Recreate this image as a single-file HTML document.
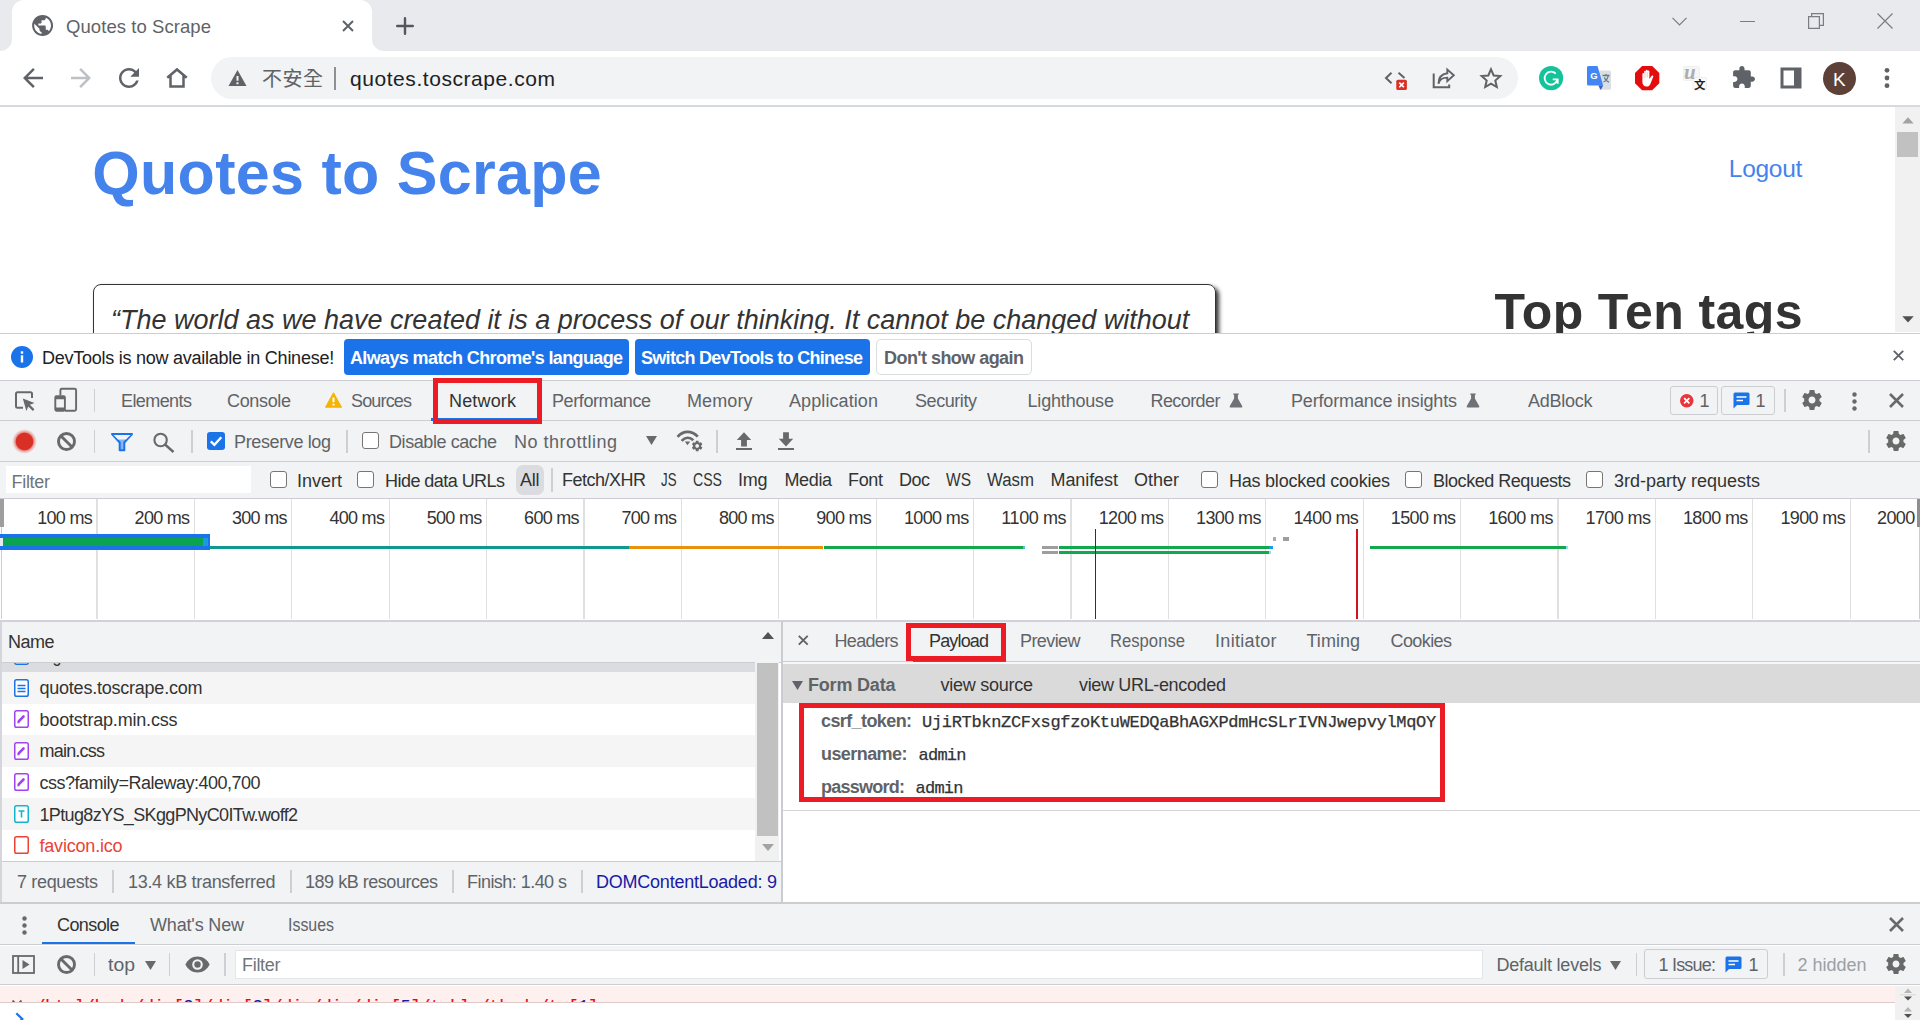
<!DOCTYPE html>
<html lang="en"><head>
<meta charset="utf-8">
<title>Quotes to Scrape</title>
<style>
html,body{margin:0;padding:0;}
body{width:1920px;height:1020px;overflow:hidden;background:#fff;position:relative;font-family:"Liberation Sans","Noto Sans CJK TC",sans-serif;font-size:18px;color:#333;}
.a{position:absolute;}
.t{position:absolute;white-space:nowrap;line-height:1;font-size:18px;color:#333;}
.g{color:#5f6368;}
.b{font-weight:bold;}
.m{font-family:"Liberation Mono","DejaVu Sans Mono",monospace;-webkit-text-stroke:0.250px currentColor;}
.sep{position:absolute;width:1.500px;background:#cdcfd3;}
.cb{position:absolute;width:15px;height:15px;border:1.5px solid #767676;border-radius:3px;background:#fff;}
.hl{position:absolute;left:0;width:1920px;height:1px;background:#cbcdd1;}
svg{position:absolute;overflow:visible;}
.redbox{position:absolute;border:5px solid #ed1c24;box-sizing:border-box;}
</style>
</head>
<body>
<!-- ===== Chrome tab strip ===== -->
<div class="a" style="left:0;top:0;width:1920px;height:51px;background:#e8eaed;"></div>
<svg style="left:0;top:0" width="384" height="51" viewBox="0 0 384 51"><path d="M0,51 A12,12 0 0 0 12,39 L12,12 A12,12 0 0 1 24,0 L360,0 A12,12 0 0 1 372,12 L372,39 A12,12 0 0 0 384,51 Z" fill="#fff"></path></svg>
<svg style="left:29.500px;top:13.400px" width="25.2" height="25.2" viewBox="0 0 24 24"><path fill="#5f6368" d="M12 2C6.48 2 2 6.48 2 12s4.48 10 10 10 10-4.48 10-10S17.52 2 12 2zm-1 17.93c-3.95-.49-7-3.85-7-7.93 0-.62.08-1.21.21-1.79L9 15v1c0 1.1.9 2 2 2v1.93zm6.9-2.54c-.26-.81-1-1.39-1.9-1.39h-1v-3c0-.55-.45-1-1-1H8v-2h2c.55 0 1-.45 1-1V7h2c1.1 0 2-.9 2-2v-.41c2.93 1.19 5 4.06 5 7.41 0 2.08-.8 3.97-2.1 5.39z"></path></svg>
<span class="t" style="color: rgb(95, 99, 104); font-size: 18.5px; left: 66px; top: 18px; letter-spacing: 0.07px;">Quotes to Scrape</span>
<svg style="left:342px;top:20px" width="12" height="12" viewBox="0 0 12 12"><path d="M1 1L11 11M11 1L1 11" stroke="#5f6368" stroke-width="2" fill="none"></path></svg>
<svg style="left:396px;top:16.500px" width="18" height="18" viewBox="0 0 18 18"><path d="M9 1.200V16.800M1.200 9H16.800" stroke="#54585d" stroke-width="2.400" stroke-linecap="round" fill="none"></path></svg>
<!-- window controls -->
<svg style="left:1672px;top:17px" width="15" height="9" viewBox="0 0 15 9"><path d="M0.5 0.8L7.5 7.8L14.5 0.8" stroke="#7a7d82" stroke-width="1.2" fill="none"></path></svg>
<div class="a" style="left:1740px;top:20.5px;width:15px;height:1.2px;background:#7a7d82"></div>
<svg style="left:1808px;top:13px" width="16" height="16" viewBox="0 0 16 16"><path d="M0.6 3.6H11.4V15.4H0.6Z M3.6 3.6V0.6H15.4V12.4H11.4" stroke="#7a7d82" stroke-width="1.2" fill="none"></path></svg>
<svg style="left:1877px;top:13px" width="16" height="16" viewBox="0 0 16 16"><path d="M0.5 0.5L15.5 15.5M15.5 0.5L0.5 15.5" stroke="#7a7d82" stroke-width="1.2" fill="none"></path></svg>
<!-- ===== toolbar ===== -->
<div class="a" style="left:0;top:51px;width:1920px;height:54px;background:#fff;"></div>
<div class="a" style="left:0;top:105px;width:1920px;height:1.900px;background:#d6d9dd;"></div>
<svg style="left:18px;top:63px" width="30" height="30" viewBox="0 0 24 24"><path fill="#5f6368" d="M20 11H7.83l5.59-5.59L12 4l-8 8 8 8 1.41-1.41L7.83 13H20v-2z"></path></svg>
<svg style="left:66px;top:63px" width="30" height="30" viewBox="0 0 24 24"><path fill="#bdc1c6" d="M4 11h12.17l-5.59-5.59L12 4l8 8-8 8-1.41-1.41L16.170 13H4v-2z"></path></svg>
<svg style="left:114px;top:63px" width="30" height="30" viewBox="0 0 24 24"><path fill="#5f6368" d="M17.65 6.35C16.2 4.9 14.21 4 12 4c-4.420 0-7.990 3.580-7.990 8s3.570 8 7.990 8c3.730 0 6.840-2.550 7.730-6h-2.080c-.82 2.330-3.040 4-5.650 4-3.310 0-6-2.690-6-6s2.690-6 6-6c1.660 0 3.140.69 4.220 1.780L13 11h7V4l-2.350 2.350z"></path></svg>
<svg style="left:162px;top:63px" width="30" height="30" viewBox="0 0 24 24"><path fill="none" stroke="#5f6368" stroke-width="2" stroke-linejoin="miter" d="M4.200 11.800L12 5.200L19.800 11.800M6.800 10V18.800H17.200V10"></path></svg>
<!-- omnibox -->
<div class="a" style="left:211px;top:57px;width:1307px;height:42px;border-radius:21px;background:#f1f3f4;"></div>
<svg style="left:228px;top:69px" width="19" height="18" viewBox="0 0 19 18"><path fill="#5f6368" d="M9.5 1L18.5 17H0.5Z"></path><path d="M9.5 7V11.800M9.5 13.300V15.200" stroke="#f1f3f4" stroke-width="2" fill="none"></path></svg>
<span class="t" style="color: rgb(95, 99, 104); font-size: 20px; font-family: &quot;Noto Sans CJK TC&quot;, &quot;Noto Sans CJK SC&quot;, sans-serif; left: 262px; top: 68px; letter-spacing: 0.5px;">不安全</span>
<div class="a" style="left:334.300px;top:67px;width:1.900px;height:22.500px;background:#8d9196"></div>
<span class="t" style="color: rgb(32, 33, 36); font-size: 21px; left: 350px; top: 67.5px; letter-spacing: 0.56px;">quotes.toscrape.com</span>
<!-- omnibox right icons -->
<svg style="left:1384px;top:71px" width="24" height="20" viewBox="0 0 24 20"><path d="M7.500 1.800L2 7L7.500 12.200" stroke="#5f6368" stroke-width="2" fill="none"></path><path d="M14.500 1.800L20.500 7" stroke="#5f6368" stroke-width="2" fill="none"></path><rect x="12.300" y="8.800" width="10.600" height="10.200" rx="1.500" fill="#d93025"></rect><path d="M15.300 11.600L19.900 16.200M19.900 11.600L15.300 16.200" stroke="#fff" stroke-width="1.600"></path></svg>
<svg style="left:1431px;top:66px" width="26" height="24" viewBox="0 0 26 24"><path d="M2.700 7.500V21.300H18.200V18.500" stroke="#5f6368" stroke-width="2" fill="none"></path><path d="M7.500 17.800C8.500 13.500 11.500 11.600 16.300 11.600V15.200L22.800 9.300L16.300 3.500V7.300C10.800 8 7.500 11.500 7.500 17.800Z" stroke="#5f6368" stroke-width="1.900" fill="none" stroke-linejoin="miter"></path></svg>
<svg style="left:1479px;top:66px" width="24" height="24" viewBox="0 0 24 24"><path d="M12 3.300L14.700 9.500L21.300 10.100L16.300 14.500L17.800 21L12 17.600L6.200 21L7.700 14.500L2.700 10.100L9.300 9.500Z" stroke="#5f6368" stroke-width="2" fill="none" stroke-linejoin="miter"></path></svg>
<!-- extensions -->
<svg style="left:1538.800px;top:65.500px" width="24.200" height="24.200" viewBox="0 0 24 24"><circle cx="12" cy="12" r="12" fill="#15c39a"></circle><path d="M16.600 7.600A6.400 6.400 0 1 0 18.100 14" stroke="#fff" stroke-width="1.800" fill="none"></path><path d="M13.600 13.200H18.600V17.600" stroke="#fff" stroke-width="1.700" fill="none"></path></svg>
<svg style="left:1586px;top:65px" width="26" height="26" viewBox="0 0 26 26"><rect x="13" y="5.400" width="12" height="19.300" rx="1.500" fill="#dcdee1"></rect><path d="M1 2.500A1.500 1.500 0 0 1 2.500 1H11.500L17.200 20.600H2.500A1.500 1.500 0 0 1 1 19.100Z" fill="#4285f4"></path><path d="M12.300 20.600H17.200L14.800 25Z" fill="#3b5fc7"></path><text x="4.200" y="13.800" font-family="Liberation Sans,sans-serif" font-weight="bold" font-size="9.500" fill="#fff">G</text><path d="M16.500 10.500H23.500M20 9V10.500M22.300 10.500C21.800 13.500 19.500 16 17.500 17M18.300 12.500C19 14.500 21 16.500 23 17.200" stroke="#5f7d95" stroke-width="1.300" fill="none"></path></svg>
<svg style="left:1635px;top:65.700px" width="24.300" height="24.300" viewBox="0 0 25 25"><path d="M7.300 0H17.700L25 7.300V17.700L17.700 25H7.300L0 17.700V7.300Z" fill="#e40d0d"></path><path d="M7.600 14V8.200A0.900 0.900 0 0 1 9.400 8.200V5.800A0.900 0.900 0 0 1 11.200 5.800V4.700A0.900 0.900 0 0 1 13 4.700V5.500A0.900 0.900 0 0 1 14.800 5.500V13.300L16.900 10.300A1 1 0 0 1 18.700 11.300L15.800 18.500C15.200 20.200 13.800 21.200 12 21.200C9.300 21.200 7.600 19.300 7.600 16.500Z" fill="#fff"></path><path d="M9.400 8V12M11.200 6V12M13 6V12" stroke="#f4a0a0" stroke-width="0.500"></path></svg>
<svg style="left:1683px;top:66px" width="25" height="25" viewBox="0 0 25 25"><rect x="0.500" y="0.500" width="16" height="14" rx="1" fill="#f6f6f6" stroke="#ececec" stroke-width="0.800"></rect><rect x="10" y="11.500" width="13.500" height="12.500" rx="1" fill="#fafafa" stroke="#ececec" stroke-width="0.800"></rect><text x="1" y="13.300" font-family="Liberation Serif,serif" font-style="italic" font-weight="bold" font-size="21" fill="#adadad">u</text><text x="11" y="22.500" font-family="Noto Sans CJK SC,Noto Sans CJK TC,sans-serif" font-weight="bold" font-size="11.500" fill="#222">文</text></svg>
<svg style="left:1731px;top:65px" width="25" height="25" viewBox="0 0 24 24"><path fill="#5f6368" d="M20.500 11H19V7c0-1.100-.9-2-2-2h-4V3.500C13 2.120 11.880 1 10.500 1S8 2.120 8 3.500V5H4c-1.100 0-1.990.9-1.990 2v3.800H3.500c1.490 0 2.700 1.210 2.700 2.700s-1.210 2.700-2.700 2.700H2V20c0 1.100.9 2 2 2h3.800v-1.500c0-1.490 1.210-2.700 2.700-2.700 1.490 0 2.700 1.210 2.700 2.700V22H17c1.100 0 2-.9 2-2v-4h1.500c1.380 0 2.500-1.120 2.500-2.500S21.880 11 20.500 11z"></path></svg>
<svg style="left:1780px;top:67px" width="22" height="22" viewBox="0 0 22 22"><rect x="2" y="2" width="18" height="18" fill="none" stroke="#5f6368" stroke-width="3"></rect><rect x="14" y="2" width="6" height="18" fill="#5f6368"></rect></svg>
<div class="a" style="left:1823px;top:62px;width:33px;height:33px;border-radius:50%;background:#5d4037;"></div>
<span class="t" style="color: rgb(255, 255, 255); font-size: 19px; left: 1833px; top: 69.5px;">K</span>
<svg style="left:1884px;top:67px" width="6" height="22" viewBox="0 0 6 22"><circle cx="3" cy="3.300" r="2.400" fill="#5f6368"></circle><circle cx="3" cy="11" r="2.400" fill="#5f6368"></circle><circle cx="3" cy="18.700" r="2.400" fill="#5f6368"></circle></svg>
<!-- ===== page content ===== -->
<div class="a" style="left:0;top:107px;width:1920px;height:225.500px;overflow:hidden;background:#fff;">
  <span class="t b" style="color: rgb(69, 131, 236); font-size: 61px; left: 92.3px; top: 36px; letter-spacing: 0.29px;">Quotes to Scrape</span>
  <span class="t" style="color: rgb(69, 131, 236); font-size: 24.5px; left: 1728.8px; top: 49.5px; letter-spacing: -0.29px;">Logout</span>
  <div class="a" style="left:93px;top:177px;width:1123px;height:80px;border:1.500px solid #333;border-radius:8px;box-shadow:3px 3px 4px #333;box-sizing:border-box;"></div>
  <span class="t" style="color: rgb(51, 51, 51); font-size: 27px; font-style: italic; left: 111px; top: 199.8px; letter-spacing: -0.01px;">“The world as we have created it is a process of our thinking. It cannot be changed without</span>
  <span class="t b" style="color: rgb(51, 51, 51); font-size: 50px; left: 1494.5px; top: 180.4px; letter-spacing: 0.39px;">Top Ten tags</span>
  <!-- page scrollbar -->
  <div class="a" style="left:1895px;top:0;width:25px;height:224.800px;background:#f1f1f1;"></div>
  <svg style="left:1901.500px;top:9.500px" width="12" height="7" viewBox="0 0 12 7"><path d="M6 0.300L11.700 6.500H0.300Z" fill="#a3a3a3"></path></svg>
  <div class="a" style="left:1897px;top:25px;width:21px;height:25px;background:#c1c1c1;"></div>
  <svg style="left:1901.500px;top:209px" width="12" height="7" viewBox="0 0 12 7"><path d="M6 6.500L11.700 0.300H0.300Z" fill="#505050"></path></svg>
</div>
<div class="a" style="left:0;top:332.800px;width:1920px;height:1.300px;background:#cbcdd6;"></div>
<!-- ===== DevTools infobar ===== -->
<div class="a" style="left:0;top:334.500px;width:1920px;height:46px;background:#fff;"></div>
<div class="hl" style="top:380px;height:1.200px;"></div>
<svg style="left:11px;top:346px" width="22" height="22" viewBox="0 0 22 22"><circle cx="11" cy="11" r="11" fill="#1a73e8"></circle><rect x="9.800" y="9.300" width="2.400" height="7.200" fill="#fff"></rect><rect x="9.800" y="5.300" width="2.400" height="2.400" fill="#fff"></rect></svg>
<span class="t" style="color: rgb(32, 33, 36); left: 42px; top: 349px; letter-spacing: -0.25px;">DevTools is now available in Chinese!</span>
<div class="a" style="left:344px;top:339px;width:285px;height:36px;border-radius:4px;background:#1a73e8;"></div>
<span class="t b" style="color: rgb(255, 255, 255); left: 350px; top: 349px; letter-spacing: -0.63px;">Always match Chrome's language</span>
<div class="a" style="left:635px;top:339px;width:234.500px;height:36px;border-radius:4px;background:#1a73e8;"></div>
<span class="t b" style="color: rgb(255, 255, 255); left: 641px; top: 349px; letter-spacing: -0.71px;">Switch DevTools to Chinese</span>
<div class="a" style="left:876px;top:339px;width:155.500px;height:36px;border-radius:5px;background:#fff;border:1px solid #dadce0;box-sizing:border-box;"></div>
<span class="t b" style="color: rgb(95, 99, 104); left: 884px; top: 349px; letter-spacing: -0.55px;">Don't show again</span>
<svg style="left:1893px;top:350px" width="11" height="11" viewBox="0 0 11 11"><path d="M0.800 0.800L10.200 10.200M10.200 0.800L0.800 10.200" stroke="#5f6368" stroke-width="1.900" fill="none"></path></svg>

<!-- ===== DevTools main tab bar ===== -->
<div class="a" style="left:0;top:381px;width:1920px;height:39.500px;background:#f1f3f4;"></div>
<div class="hl" style="top:420px;height:1.200px;"></div>
<!-- inspect icon -->
<svg style="left:14px;top:390px" width="22" height="22" viewBox="0 0 22 22"><path d="M9 17.800H3.500A1.500 1.500 0 0 1 2 16.300V3.800A1.500 1.500 0 0 1 3.500 2.300H16.500A1.500 1.500 0 0 1 18 3.800V8" stroke="#696969" stroke-width="2" fill="none"></path><path d="M8.800 8.600L20.500 12.900L15.900 14.800L20.400 19.300L18.800 20.900L14.300 16.400L12.400 21Z" fill="#696969"></path></svg>
<!-- device icon -->
<svg style="left:53px;top:387px" width="25" height="26" viewBox="0 0 25 26"><path d="M7.400 8.500V3.200A1.500 1.500 0 0 1 8.900 1.700H21.600A1.500 1.500 0 0 1 23.100 3.200V22.300A1.500 1.500 0 0 1 21.600 23.800H12" stroke="#696969" stroke-width="1.900" fill="none"></path><rect x="2.300" y="9.300" width="9.600" height="14.500" rx="1.200" stroke="#696969" stroke-width="1.900" fill="none"></rect><path d="M2.300 11H11.900M2.300 21.800H11.900" stroke="#696969" stroke-width="2.400"></path></svg>
<div class="sep" style="left:93.500px;top:389px;height:23px;"></div>
<span class="t g" style="left: 121px; top: 392px; letter-spacing: -0.58px;">Elements</span>
<span class="t g" style="left: 227px; top: 392px; letter-spacing: -0.34px;">Console</span>
<svg style="left:325px;top:392px" width="17" height="16" viewBox="0 0 17 16"><path d="M8.500 0.800L16.500 15.200H0.500Z" fill="#f4b400" stroke="#f4b400" stroke-width="1" stroke-linejoin="round"></path><path d="M8.500 5.500V10.300M8.500 11.800V13.600" stroke="#fff" stroke-width="2"></path></svg>
<span class="t g" style="left: 351px; top: 392px; letter-spacing: -0.84px;">Sources</span>
<div class="a" style="left:431px;top:418.300px;width:111px;height:2.700px;background:#1a73e8;"></div>
<span class="t" style="left: 449px; top: 392px; letter-spacing: 0.16px;">Network</span>
<span class="t g" style="left: 552px; top: 392px; letter-spacing: -0.4px;">Performance</span>
<span class="t g" style="left: 687px; top: 392px; letter-spacing: 0.1px;">Memory</span>
<span class="t g" style="left: 789px; top: 392px; letter-spacing: 0.09px;">Application</span>
<span class="t g" style="left: 915px; top: 392px; letter-spacing: -0.43px;">Security</span>
<span class="t g" style="left: 1027.5px; top: 392px; letter-spacing: -0.18px;">Lighthouse</span>
<span class="t g" style="left: 1150.5px; top: 392px; letter-spacing: -0.58px;">Recorder</span>
<svg style="left:1229px;top:392.500px" width="14" height="15" viewBox="0 0 14 15"><path d="M4.300 0.500H9.700V1.800H8.900V5.500L13.300 13.200Q13.700 14.500 12.300 14.500H1.700Q0.300 14.500 0.700 13.200L5.100 5.500V1.800H4.300Z" fill="#6e7175"></path></svg>
<span class="t g" style="left: 1291px; top: 392px; letter-spacing: -0.16px;">Performance insights</span>
<svg style="left:1465.500px;top:392.500px" width="14" height="15" viewBox="0 0 14 15"><path d="M4.300 0.500H9.700V1.800H8.900V5.500L13.300 13.200Q13.700 14.500 12.300 14.500H1.700Q0.300 14.500 0.700 13.200L5.100 5.500V1.800H4.300Z" fill="#6e7175"></path></svg>
<span class="t g" style="left: 1528px; top: 392px; letter-spacing: -0.26px;">AdBlock</span>
<!-- badges -->
<div class="a" style="left:1670px;top:385.500px;width:47.500px;height:29.500px;border:1px solid #cbcdd1;border-radius:3px;box-sizing:border-box;background:#f1f3f4"></div>
<svg style="left:1679.500px;top:394px" width="13.500" height="13.500" viewBox="0 0 14 14"><circle cx="7" cy="7" r="7" fill="#e8343b"></circle><path d="M4.300 4.300L9.700 9.700M9.700 4.300L4.300 9.700" stroke="#fff" stroke-width="1.800"></path></svg>
<span class="t g" style="left: 1699.5px; top: 392px;">1</span>
<div class="a" style="left:1721px;top:385.500px;width:54px;height:29.500px;border:1px solid #cbcdd1;border-radius:3px;box-sizing:border-box;background:#f1f3f4"></div>
<svg style="left:1732.500px;top:392px" width="17" height="17" viewBox="0 0 17 17"><path d="M2 0.500H15A1.500 1.500 0 0 1 16.500 2V11.500A1.500 1.500 0 0 1 15 13H4L0.500 16.500V2A1.500 1.500 0 0 1 2 0.500Z" fill="#1a73e8"></path><path d="M3.500 5H13.500M3.500 8.500H10" stroke="#fff" stroke-width="1.600"></path></svg>
<span class="t g" style="left: 1755.5px; top: 392px;">1</span>
<div class="sep" style="left:1784px;top:388.500px;height:23px;"></div>
<svg class="gear" style="left:1800px;top:388px" width="24" height="24" viewBox="0 0 24 24"><path fill="#696969" d="M19.430 12.980c.04-.32.070-.64.070-.98s-.03-.66-.07-.98l2.110-1.650c.19-.15.240-.42.120-.64l-2-3.460c-.12-.22-.39-.3-.61-.22l-2.490 1c-.52-.4-1.080-.73-1.690-.98l-.38-2.650C14.460 2.180 14.250 2 14 2h-4c-.25 0-.46.18-.49.420l-.38 2.650c-.61.250-1.170.59-1.690.98l-2.490-1c-.23-.09-.49 0-.61.220l-2 3.460c-.13.220-.07.490.12.640l2.110 1.650c-.4.320-.7.650-.7.980s.3.660.7.980l-2.110 1.650c-.19.150-.24.420-.12.640l2 3.460c.12.220.39.300.61.220l2.490-1c.52.400 1.080.73 1.690.98l.38 2.650c.3.240.24.420.49.420h4c.25 0 .46-.18.490-.42l.38-2.650c.61-.25 1.170-.59 1.690-.98l2.490 1c.23.090.49 0 .61-.22l2-3.460c.12-.22.070-.49-.12-.64l-2.110-1.650zM12 15.500c-1.930 0-3.500-1.570-3.500-3.500s1.570-3.500 3.500-3.500 3.500 1.570 3.500 3.500-1.570 3.500-3.500 3.500z"></path></svg>
<svg style="left:1851.500px;top:391.500px" width="5" height="19" viewBox="0 0 5 19"><circle cx="2.500" cy="2.500" r="2.200" fill="#696969"></circle><circle cx="2.500" cy="9.500" r="2.200" fill="#696969"></circle><circle cx="2.500" cy="16.500" r="2.200" fill="#696969"></circle></svg>
<svg style="left:1888.500px;top:392.500px" width="15" height="15" viewBox="0 0 15 15"><path d="M1 1L14 14M14 1L1 14" stroke="#696969" stroke-width="2.600" fill="none"></path></svg>
<!-- ===== Network toolbar ===== -->
<div class="a" style="left:0;top:421px;width:1920px;height:40.500px;background:#f1f3f4;"></div>
<div class="hl" style="top:461px;height:1.200px;"></div>
<div class="a" style="left:11.500px;top:428.500px;width:25px;height:25px;border-radius:50%;background:radial-gradient(circle,#d93025 0,#d93025 8.200px,rgba(217,48,37,0.450) 9.400px,rgba(217,48,37,0.150) 11.300px,rgba(217,48,37,0) 12.500px);"></div>
<svg style="left:56px;top:431px" width="21" height="21" viewBox="0 0 21 21"><circle cx="10.500" cy="10.500" r="8" fill="none" stroke="#696969" stroke-width="2.900"></circle><path d="M4.700 4.700L16.300 16.300" stroke="#696969" stroke-width="2.900"></path></svg>
<div class="sep" style="left:93.500px;top:429.500px;height:23px;"></div>
<svg style="left:110px;top:432px" width="24" height="20" viewBox="0 0 24 20"><path d="M2 2H22L14.300 10.500V18.300H9.700V10.500Z" fill="#8ab4f8" stroke="#1a73e8" stroke-width="2" stroke-linejoin="round"></path><path d="M3.500 3H20.500L16 7.600H8Z" fill="#f1f3f4"></path></svg>
<svg style="left:152px;top:431px" width="24" height="24" viewBox="0 0 24 24"><circle cx="8.600" cy="9" r="6.200" fill="none" stroke="#696969" stroke-width="2.100"></circle><path d="M13 13.500L21.500 21" stroke="#696969" stroke-width="2.400"></path></svg>
<div class="sep" style="left:191px;top:429.500px;height:23px;"></div>
<svg style="left:207px;top:432px" width="18" height="18" viewBox="0 0 18 18"><rect width="18" height="18" rx="3" fill="#1a73e8"></rect><path d="M3.800 9.300L7.400 12.800L14.300 5.300" stroke="#fff" stroke-width="2.400" fill="none"></path></svg>
<span class="t g" style="left: 234px; top: 432.5px; letter-spacing: -0.37px;">Preserve log</span>
<div class="sep" style="left:346px;top:429.500px;height:23px;"></div>
<div class="cb" style="left:362px;top:432px;"></div>
<span class="t g" style="left: 389px; top: 432.5px; letter-spacing: -0.42px;">Disable cache</span>
<span class="t g" style="left: 514px; top: 432.5px; letter-spacing: 0.49px;">No throttling</span>
<svg style="left:645.500px;top:436px" width="11" height="9" viewBox="0 0 11 9"><path d="M0 0H11L5.500 9Z" fill="#696969"></path></svg>
<!-- wifi gear -->
<svg style="left:676px;top:429px" width="28" height="23" viewBox="0 0 28 23"><path d="M1.500 7.800C7.500 1.300 15.500 1.300 21.800 7.600" stroke="#696969" stroke-width="2.700" fill="none"></path><path d="M5.600 11.800C9.300 7.800 13.800 7.800 17.300 11.300" stroke="#696969" stroke-width="2.700" fill="none"></path><path d="M8.800 12.600H14.200L11.500 16.300Z" fill="#696969"></path><g transform="translate(14.800,10.600) scale(0.530)"><path fill="#696969" d="M19.430 12.980c.04-.32.070-.64.070-.98s-.03-.66-.07-.98l2.110-1.650c.19-.15.240-.42.120-.64l-2-3.460c-.12-.22-.39-.3-.61-.22l-2.490 1c-.52-.4-1.080-.73-1.690-.98l-.38-2.650C14.460 2.180 14.250 2 14 2h-4c-.25 0-.46.18-.49.420l-.38 2.650c-.61.250-1.170.59-1.690.98l-2.490-1c-.23-.09-.49 0-.61.220l-2 3.460c-.13.220-.07.490.12.640l2.110 1.650c-.4.320-.7.650-.7.980s.3.660.7.980l-2.110 1.650c-.19.150-.24.420-.12.640l2 3.460c.12.220.39.300.61.220l2.490-1c.52.400 1.080.73 1.690.98l.38 2.650c.3.240.24.420.49.420h4c.25 0 .46-.18.490-.42l.38-2.650c.61-.25 1.170-.59 1.690-.98l2.490 1c.23.090.49 0 .61-.22l2-3.460c.12-.22.070-.49-.12-.64l-2.110-1.650zM12 15.500c-1.930 0-3.500-1.570-3.500-3.500s1.570-3.500 3.500-3.500 3.500 1.570 3.500 3.500-1.570 3.500-3.500 3.500z"></path></g></svg>
<div class="sep" style="left:716px;top:429.500px;height:23px;"></div>
<svg style="left:736px;top:432px" width="16" height="19" viewBox="0 0 16 19"><path d="M8 0.300L15.200 8H10.900V14.500H5.100V8H0.800Z" fill="#696969"></path><rect x="0" y="16" width="16" height="2" fill="#696969"></rect></svg>
<svg style="left:778px;top:432px" width="16" height="19" viewBox="0 0 16 19"><path d="M8 14.500L15.200 6.800H10.900V0.300H5.100V6.800H0.800Z" fill="#696969"></path><rect x="0" y="16" width="16" height="2" fill="#696969"></rect></svg>
<div class="sep" style="left:1868px;top:429.500px;height:23px;"></div>
<svg style="left:1884px;top:429px" width="24" height="24" viewBox="0 0 24 24"><path fill="#696969" d="M19.430 12.980c.04-.32.070-.64.070-.98s-.03-.66-.07-.98l2.110-1.650c.19-.15.240-.42.120-.64l-2-3.460c-.12-.22-.39-.3-.61-.22l-2.490 1c-.52-.4-1.080-.73-1.690-.98l-.38-2.650C14.460 2.180 14.250 2 14 2h-4c-.25 0-.46.18-.49.420l-.38 2.650c-.61.250-1.170.59-1.690.98l-2.490-1c-.23-.09-.49 0-.61.220l-2 3.460c-.13.220-.07.490.12.640l2.110 1.650c-.4.320-.7.650-.7.980s.3.660.7.980l-2.110 1.650c-.19.150-.24.420-.12.640l2 3.460c.12.220.39.300.61.220l2.490-1c.52.400 1.080.73 1.690.98l.38 2.650c.3.240.24.420.49.420h4c.25 0 .46-.18.490-.42l.38-2.650c.61-.25 1.170-.59 1.690-.98l2.490 1c.23.090.49 0 .61-.22l2-3.460c.12-.22.070-.49-.12-.64l-2.110-1.650zM12 15.500c-1.930 0-3.500-1.570-3.500-3.500s1.570-3.500 3.500-3.500 3.500 1.570 3.500 3.500-1.570 3.500-3.500 3.500z"></path></svg>

<!-- ===== Filter bar ===== -->
<div class="a" style="left:0;top:462px;width:1920px;height:36px;background:#f1f3f4;"></div>
<div class="hl" style="top:498px;height:1.200px;"></div>
<div class="a" style="left:6px;top:466px;width:245px;height:27px;background:#fff;"></div>
<span class="t" style="color: rgb(112, 117, 122); left: 11.5px; top: 473px; letter-spacing: -0.3px;">Filter</span>
<div class="cb" style="left:270px;top:471px;"></div>
<span class="t" style="left: 297px; top: 471.5px; letter-spacing: -0.01px;">Invert</span>
<div class="cb" style="left:357px;top:471px;"></div>
<span class="t" style="left: 385px; top: 471.5px; letter-spacing: -0.54px;">Hide data URLs</span>
<div class="a" style="left:516px;top:465px;width:27.500px;height:30px;border-radius:7px;background:#dadce0;"></div>
<span class="t" style="left: 520px; top: 470.5px; letter-spacing: -0.26px;">All</span>
<div class="sep" style="left:551px;top:468px;height:24px;"></div>
<span class="t" style="left: 562px; top: 470.5px; letter-spacing: -0.5px;">Fetch/XHR</span>
<span class="t" style="left: 661px; top: 470.5px; transform: scaleX(0.738); transform-origin: 0px 0px;">JS</span>
<span class="t" style="left: 692.5px; top: 470.5px; transform: scaleX(0.783); transform-origin: 0px 0px;">CSS</span>
<span class="t" style="left: 738px; top: 470.5px; letter-spacing: -0.26px;">Img</span>
<span class="t" style="left: 784.5px; top: 470.5px; letter-spacing: -0.38px;">Media</span>
<span class="t" style="left: 848px; top: 470.5px; letter-spacing: -0.34px;">Font</span>
<span class="t" style="left: 899px; top: 470.5px; letter-spacing: -0.51px;">Doc</span>
<span class="t" style="left: 946px; top: 470.5px; transform: scaleX(0.862); transform-origin: 0px 0px;">WS</span>
<span class="t" style="left: 987px; top: 470.5px; transform: scaleX(0.934); transform-origin: 0px 0px;">Wasm</span>
<span class="t" style="left: 1050.5px; top: 470.5px; letter-spacing: -0.08px;">Manifest</span>
<span class="t" style="left: 1134px; top: 470.5px; letter-spacing: -0.01px;">Other</span>
<div class="cb" style="left:1201px;top:471px;"></div>
<span class="t" style="left: 1229px; top: 471.5px; letter-spacing: -0.23px;">Has blocked cookies</span>
<div class="cb" style="left:1405px;top:471px;"></div>
<span class="t" style="left: 1433px; top: 471.5px; letter-spacing: -0.47px;">Blocked Requests</span>
<div class="cb" style="left:1586px;top:471px;"></div>
<span class="t" style="left: 1614px; top: 471.5px; letter-spacing: 0px;">3rd-party requests</span>
<!-- ===== Network overview ===== -->
<div class="a" style="left:0;top:499px;width:1920px;height:121px;background:#fff;overflow:hidden;">
<div class="a" style="left:96.49px;top:0;width:1.200px;height:120px;background:#e0e0e0;"></div>
<div class="a" style="left:193.88px;top:0;width:1.200px;height:120px;background:#e0e0e0;"></div>
<div class="a" style="left:291.27px;top:0;width:1.200px;height:120px;background:#e0e0e0;"></div>
<div class="a" style="left:388.66px;top:0;width:1.200px;height:120px;background:#e0e0e0;"></div>
<div class="a" style="left:486.05px;top:0;width:1.200px;height:120px;background:#e0e0e0;"></div>
<div class="a" style="left:583.44px;top:0;width:1.200px;height:120px;background:#e0e0e0;"></div>
<div class="a" style="left:680.83px;top:0;width:1.200px;height:120px;background:#e0e0e0;"></div>
<div class="a" style="left:778.22px;top:0;width:1.200px;height:120px;background:#e0e0e0;"></div>
<div class="a" style="left:875.61px;top:0;width:1.200px;height:120px;background:#e0e0e0;"></div>
<div class="a" style="left:973.00px;top:0;width:1.200px;height:120px;background:#e0e0e0;"></div>
<div class="a" style="left:1070.39px;top:0;width:1.200px;height:120px;background:#e0e0e0;"></div>
<div class="a" style="left:1167.78px;top:0;width:1.200px;height:120px;background:#e0e0e0;"></div>
<div class="a" style="left:1265.17px;top:0;width:1.200px;height:120px;background:#e0e0e0;"></div>
<div class="a" style="left:1362.56px;top:0;width:1.200px;height:120px;background:#e0e0e0;"></div>
<div class="a" style="left:1459.95px;top:0;width:1.200px;height:120px;background:#e0e0e0;"></div>
<div class="a" style="left:1557.34px;top:0;width:1.200px;height:120px;background:#e0e0e0;"></div>
<div class="a" style="left:1654.73px;top:0;width:1.200px;height:120px;background:#e0e0e0;"></div>
<div class="a" style="left:1752.12px;top:0;width:1.200px;height:120px;background:#e0e0e0;"></div>
<div class="a" style="left:1849.51px;top:0;width:1.200px;height:120px;background:#e0e0e0;"></div>
<span class="t" style="color: rgb(51, 51, 51); left: 37.21px; top: 9.8px; letter-spacing: -0.71px;">100 ms</span>
<span class="t" style="color: rgb(51, 51, 51); left: 134.61px; top: 9.8px; letter-spacing: -0.71px;">200 ms</span>
<span class="t" style="color: rgb(51, 51, 51); left: 232.01px; top: 9.8px; letter-spacing: -0.71px;">300 ms</span>
<span class="t" style="color: rgb(51, 51, 51); left: 329.41px; top: 9.8px; letter-spacing: -0.71px;">400 ms</span>
<span class="t" style="color: rgb(51, 51, 51); left: 426.71px; top: 9.8px; letter-spacing: -0.71px;">500 ms</span>
<span class="t" style="color: rgb(51, 51, 51); left: 524.11px; top: 9.8px; letter-spacing: -0.71px;">600 ms</span>
<span class="t" style="color: rgb(51, 51, 51); left: 621.51px; top: 9.8px; letter-spacing: -0.71px;">700 ms</span>
<span class="t" style="color: rgb(51, 51, 51); left: 718.91px; top: 9.8px; letter-spacing: -0.71px;">800 ms</span>
<span class="t" style="color: rgb(51, 51, 51); left: 816.31px; top: 9.8px; letter-spacing: -0.71px;">900 ms</span>
<span class="t" style="color: rgb(51, 51, 51); left: 903.88px; top: 9.8px; letter-spacing: -0.62px;">1000 ms</span>
<span class="t" style="color: rgb(51, 51, 51); left: 1001.29px; top: 9.8px; letter-spacing: -0.4px;">1100 ms</span>
<span class="t" style="color: rgb(51, 51, 51); left: 1098.68px; top: 9.8px; letter-spacing: -0.62px;">1200 ms</span>
<span class="t" style="color: rgb(51, 51, 51); left: 1196.08px; top: 9.8px; letter-spacing: -0.62px;">1300 ms</span>
<span class="t" style="color: rgb(51, 51, 51); left: 1293.48px; top: 9.8px; letter-spacing: -0.62px;">1400 ms</span>
<span class="t" style="color: rgb(51, 51, 51); left: 1390.78px; top: 9.8px; letter-spacing: -0.62px;">1500 ms</span>
<span class="t" style="color: rgb(51, 51, 51); left: 1488.18px; top: 9.8px; letter-spacing: -0.62px;">1600 ms</span>
<span class="t" style="color: rgb(51, 51, 51); left: 1585.58px; top: 9.8px; letter-spacing: -0.62px;">1700 ms</span>
<span class="t" style="color: rgb(51, 51, 51); left: 1682.98px; top: 9.8px; letter-spacing: -0.62px;">1800 ms</span>
<span class="t" style="color: rgb(51, 51, 51); left: 1780.38px; top: 9.8px; letter-spacing: -0.62px;">1900 ms</span>
<span class="t" style="color: rgb(51, 51, 51); left: 1877px; top: 9.8px; letter-spacing: -0.62px;">2000 ms</span>
<div class="a" style="left:0;top:0;width:4px;height:28px;background:#9e9e9e;"></div>
<div class="a" style="left:1917px;top:0;width:3px;height:28px;background:#8f8f8f;"></div><div class="a" style="left:1918.500px;top:28px;width:1.500px;height:92px;background:#c3cbe6;"></div>
<div class="a" style="left:0.500px;top:28px;width:1.500px;height:92px;background:#c3cbe6;"></div>
<div class="a" style="left:210px;top:47.400px;width:419px;height:3px;background:#0e998c;"></div>
<div class="a" style="left:629px;top:47.400px;width:194px;height:3px;background:#e8910c;"></div>
<div class="a" style="left:824px;top:47.400px;width:199px;height:3px;background:#12a94e;"></div>
<div class="a" style="left:1023px;top:47.400px;width:2px;height:3px;background:#5ab8f5;"></div>
<div class="a" style="left:1041.500px;top:47px;width:16px;height:3px;background:#9e9e9e;"></div>
<div class="a" style="left:1041.500px;top:51.500px;width:16px;height:3.500px;background:#9e9e9e;"></div>
<div class="a" style="left:1059px;top:47px;width:210px;height:3px;background:#12a94e;"></div>
<div class="a" style="left:1059px;top:51.500px;width:210px;height:3.500px;background:#12a94e;"></div>
<div class="a" style="left:1269px;top:47px;width:4px;height:3px;background:#1a9af0;"></div>
<div class="a" style="left:1269px;top:51.500px;width:1.500px;height:3.500px;background:#9ad6f5;"></div>
<div class="a" style="left:1273px;top:38px;width:2.500px;height:3.500px;background:#ababab;"></div>
<div class="a" style="left:1283px;top:38px;width:6px;height:3.500px;background:#9e9e9e;"></div>
<div class="a" style="left:1369.500px;top:47.400px;width:196px;height:3px;background:#12a94e;"></div>
<div class="a" style="left:1565.500px;top:47.400px;width:2px;height:3px;background:#9ad6f5;"></div>
<div class="a" style="left:0;top:35px;width:210px;height:15.500px;background:#1a73e8;"></div>
<div class="a" style="left:0;top:38.500px;width:3px;height:8px;background:#e8eaed;"></div>
<div class="a" style="left:3px;top:38.500px;width:200px;height:8px;background:#0ba350;"></div>
<div class="a" style="left:203px;top:38.500px;width:5px;height:8px;background:#1a9ae0;"></div>
<div class="a" style="left:1095.100px;top:30px;width:1.400px;height:90px;background:#2323ad;"></div>
<div class="a" style="left:1356.100px;top:30px;width:1.500px;height:90px;background:#d0141e;"></div>
</div>
<div class="hl" style="top:619.800px;height:2px;background:#d0d2d6;"></div>
<!-- ===== Name panel ===== -->
<div class="a" style="left:0;top:621.500px;width:783px;height:281px;background:#fff;overflow:hidden;">
  <!-- header -->
  <div class="a" style="left:0;top:0;width:781px;height:40px;background:#f1f3f4;"></div>
  <div class="a" style="left:0;top:40px;width:781px;height:1.200px;background:#cbcdd1;"></div>
  <span class="t" style="left: 8px; top: 11px; letter-spacing: -0.51px;">Name</span>
  <svg style="left:761.500px;top:10.500px" width="12" height="7" viewBox="0 0 12 7"><path d="M6 0L12 7H0Z" fill="#505357"></path></svg>
  <!-- rows (container y offset 621.5) -->
  <div class="a" style="left:2px;top:41.200px;width:753px;height:9.300px;background:#dadce0;"></div>
  <div class="a" style="left:2px;top:50.500px;width:753px;height:31.500px;background:#f5f5f5;"></div>
  <div class="a" style="left:2px;top:82px;width:753px;height:31.500px;background:#fff;"></div>
  <div class="a" style="left:2px;top:113.500px;width:753px;height:31.500px;background:#f5f5f5;"></div>
  <div class="a" style="left:2px;top:145px;width:753px;height:31.500px;background:#fff;"></div>
  <div class="a" style="left:2px;top:176.500px;width:753px;height:31.500px;background:#f5f5f5;"></div>
  <div class="a" style="left:2px;top:208px;width:753px;height:31.500px;background:#fff;"></div>
  <!-- clipped selected row (login) -->
  <div class="a" style="left:2px;top:41.200px;width:753px;height:9.300px;overflow:hidden;">
    <svg style="left:12px;top:-16.200px" width="15" height="18" viewBox="0 0 15 18"><rect x="0.750" y="0.750" width="13.500" height="16.500" rx="1.800" fill="#fff" stroke="#1a73e8" stroke-width="1.500"></rect></svg>
    <span class="t" style="left: 37.5px; top: -15.4px; transform: scaleX(0.894); transform-origin: 0px 0px;">login</span>
  </div>
  <!-- icons -->
  <svg style="left:14px;top:57px" width="15" height="18" viewBox="0 0 15 18"><rect x="0.750" y="0.750" width="13.500" height="16.500" rx="1.800" fill="#fff" stroke="#1a73e8" stroke-width="1.500"></rect><path d="M3.500 6.500H11.500M3.500 9.500H11.500M3.500 12.500H11.500" stroke="#1a73e8" stroke-width="1.500"></path></svg>
  <svg style="left:14px;top:88.500px" width="15" height="18" viewBox="0 0 15 18"><rect x="0.750" y="0.750" width="13.500" height="16.500" rx="1.800" fill="#fff" stroke="#a142f4" stroke-width="1.500"></rect><path d="M4.700 11.300L9.500 6.500" stroke="#a142f4" stroke-width="2.600" stroke-linecap="round"></path><path d="M3.300 13.600L4 11L6 13Z" fill="#a142f4"></path></svg>
  <svg style="left:14px;top:120px" width="15" height="18" viewBox="0 0 15 18"><rect x="0.750" y="0.750" width="13.500" height="16.500" rx="1.800" fill="#fff" stroke="#a142f4" stroke-width="1.500"></rect><path d="M4.700 11.300L9.500 6.500" stroke="#a142f4" stroke-width="2.600" stroke-linecap="round"></path><path d="M3.300 13.600L4 11L6 13Z" fill="#a142f4"></path></svg>
  <svg style="left:14px;top:151.500px" width="15" height="18" viewBox="0 0 15 18"><rect x="0.750" y="0.750" width="13.500" height="16.500" rx="1.800" fill="#fff" stroke="#a142f4" stroke-width="1.500"></rect><path d="M4.700 11.300L9.500 6.500" stroke="#a142f4" stroke-width="2.600" stroke-linecap="round"></path><path d="M3.300 13.600L4 11L6 13Z" fill="#a142f4"></path></svg>
  <svg style="left:14px;top:183px" width="15" height="18" viewBox="0 0 15 18"><rect x="0.750" y="0.750" width="13.500" height="16.500" rx="1.800" fill="#fff" stroke="#12b5cb" stroke-width="1.500"></rect><path d="M4.500 6H10.500M7.500 6V12.500" stroke="#12b5cb" stroke-width="1.600"></path></svg>
  <svg style="left:14px;top:214.500px" width="15" height="18" viewBox="0 0 15 18"><rect x="0.750" y="0.750" width="13.500" height="16.500" rx="1.800" fill="#fff" stroke="#ea4335" stroke-width="1.500"></rect></svg>
  <!-- names -->
  <span class="t" style="left: 39.5px; top: 57.2px; letter-spacing: -0.23px;">quotes.toscrape.com</span>
  <span class="t" style="left: 39.5px; top: 89.4px; letter-spacing: -0.19px;">bootstrap.min.css</span>
  <span class="t" style="left: 39.5px; top: 120.9px; letter-spacing: -0.79px;">main.css</span>
  <span class="t" style="left: 39.5px; top: 152.5px; letter-spacing: -0.5px;">css?family=Raleway:400,700</span>
  <span class="t" style="left: 39.5px; top: 184px; letter-spacing: -0.64px;">1Ptug8zYS_SKggPNyC0ITw.woff2</span>
  <span class="t" style="color: rgb(234, 67, 53); left: 39.5px; top: 215.5px; letter-spacing: -0.2px;">favicon.ico</span>
  <!-- scrollbar -->
  <div class="a" style="left:755px;top:40.700px;width:24px;height:198.800px;background:#f1f1f1;"></div>
  <div class="a" style="left:757px;top:41.500px;width:21px;height:172.500px;background:#c1c1c1;"></div>
  <svg style="left:761.500px;top:222.500px" width="12" height="7" viewBox="0 0 12 7"><path d="M6 7L12 0H0Z" fill="#a3a3a3"></path></svg>
  <!-- summary bar -->
  <div class="a" style="left:2px;top:239.500px;width:779px;height:1.200px;background:#cbcdd1;"></div>
  <div class="a" style="left:2px;top:240.700px;width:779px;height:40.300px;background:#f1f3f4;"></div>
  <span class="t g" style="left: 17px; top: 251.4px; letter-spacing: -0.34px;">7 requests</span>
  <div class="sep" style="left:112px;top:248.500px;height:23px;"></div>
  <span class="t g" style="left: 128px; top: 251.4px; letter-spacing: -0.31px;">13.4 kB transferred</span>
  <div class="sep" style="left:290px;top:248.500px;height:23px;"></div>
  <span class="t g" style="left: 305px; top: 251.4px; letter-spacing: -0.47px;">189 kB resources</span>
  <div class="sep" style="left:452px;top:248.500px;height:23px;"></div>
  <span class="t g" style="left: 467px; top: 251.4px; letter-spacing: -0.54px;">Finish: 1.40 s</span>
  <div class="sep" style="left:581px;top:248.500px;height:23px;"></div>
  <span class="t" style="color: rgb(26, 26, 166); left: 596px; top: 251.4px; letter-spacing: -0.23px;">DOMContentLoaded: 9</span>
  <!-- borders -->
  <div class="a" style="left:0;top:0;width:1.600px;height:281px;background:#d3d6da;"></div>
  <div class="a" style="left:780.700px;top:0;width:2.300px;height:281px;background:#c9ccd1;"></div>
</div>
<!-- ===== Details panel ===== -->
<div class="a" style="left:783px;top:621.500px;width:1137px;height:281px;background:#fff;overflow:hidden;">
  <div class="a" style="left:0;top:0;width:1138px;height:39px;background:#f1f3f4;"></div>
  <div class="a" style="left:0;top:39px;width:1138px;height:1.200px;background:#cbcdd1;"></div>
  <div class="a" style="left:130px;top:38.300px;width:93px;height:2px;background:#1a73e8;"></div>
  <div class="a" style="left:0;top:40.200px;width:1138px;height:2.300px;background:#f6f7f8;"></div>
  <div class="a" style="left:0;top:42.500px;width:1138px;height:38.500px;background:#dadada;"></div>
  <div class="a" style="left:0;top:188.300px;width:1138px;height:1.200px;background:#d4d4d4;"></div>
</div>
<svg style="left:797.500px;top:635px" width="10.500" height="10.500" viewBox="0 0 10.500 10.500"><path d="M0.800 0.800L9.700 9.700M9.700 0.800L0.800 9.700" stroke="#5f6368" stroke-width="1.900" fill="none"></path></svg>
<span class="t g" style="left: 834.5px; top: 631.9px; letter-spacing: -0.67px;">Headers</span>
<span class="t" style="left: 929px; top: 631.9px; letter-spacing: -0.84px;">Payload</span>
<span class="t g" style="left: 1020px; top: 631.9px; letter-spacing: -0.59px;">Preview</span>
<span class="t g" style="left: 1110px; top: 631.9px; transform: scaleX(0.925); transform-origin: 0px 0px;">Response</span>
<span class="t g" style="left: 1215px; top: 631.9px; letter-spacing: 0.31px;">Initiator</span>
<span class="t g" style="left: 1306.5px; top: 631.9px; letter-spacing: 0.03px;">Timing</span>
<span class="t g" style="left: 1390.5px; top: 631.9px; letter-spacing: -0.59px;">Cookies</span>
<svg style="left:792px;top:680.500px" width="11" height="9" viewBox="0 0 11 9"><path d="M0 0H11L5.500 9Z" fill="#5f6368"></path></svg>
<span class="t b g" style="left: 808px; top: 676px; letter-spacing: -0.19px;">Form Data</span>
<span class="t" style="left: 940.5px; top: 676px; letter-spacing: -0.25px;">view source</span>
<span class="t" style="left: 1079px; top: 676px; letter-spacing: -0.34px;">view URL-encoded</span>
<span class="t b g" style="left: 821px; top: 712px; letter-spacing: -0.6px;">csrf_token:</span>
<span class="t m" style="font-size: 17px; left: 922px; top: 714px; letter-spacing: -0.32px;">UjiRTbknZCFxsgfzoKtuWEDQaBhAGXPdmHcSLrIVNJwepvylMqOY</span>
<span class="t b g" style="left: 821px; top: 745px; letter-spacing: -0.57px;">username:</span>
<span class="t m" style="font-size: 17px; left: 918.5px; top: 747px; letter-spacing: -0.75px;">admin</span>
<span class="t b g" style="left: 821px; top: 778px; letter-spacing: -0.75px;">password:</span>
<span class="t m" style="font-size: 17px; left: 915.5px; top: 780px; letter-spacing: -0.75px;">admin</span>
<div class="hl" style="top:902.300px;height:1.800px;"></div>
<!-- ===== Drawer ===== -->
<div class="a" style="left:0;top:904px;width:1920px;height:40.500px;background:#f1f3f4;"></div>
<div class="hl" style="top:944.300px;height:1.200px;"></div>
<svg style="left:22px;top:915.500px" width="5" height="19" viewBox="0 0 5 19"><circle cx="2.500" cy="2.500" r="2.200" fill="#696969"></circle><circle cx="2.500" cy="9.500" r="2.200" fill="#696969"></circle><circle cx="2.500" cy="16.500" r="2.200" fill="#696969"></circle></svg>
<span class="t" style="left: 57px; top: 916px; letter-spacing: -0.59px;">Console</span>
<div class="a" style="left:42px;top:941.800px;width:93px;height:2.700px;background:#1a73e8;"></div>
<span class="t g" style="left: 150px; top: 916px; letter-spacing: -0.16px;">What's New</span>
<span class="t g" style="left: 288px; top: 916px; transform: scaleX(0.884); transform-origin: 0px 0px;">Issues</span>
<svg style="left:1888.500px;top:916.500px" width="15" height="15" viewBox="0 0 15 15"><path d="M1 1L14 14M14 1L1 14" stroke="#696969" stroke-width="2.600" fill="none"></path></svg>
<!-- console toolbar -->
<div class="a" style="left:0;top:945.500px;width:1920px;height:39px;background:#f1f3f4;"></div>
<div class="hl" style="top:984.300px;height:1.200px;"></div>
<svg style="left:12px;top:955px" width="23" height="19" viewBox="0 0 23 19"><rect x="1" y="1" width="21" height="17" fill="none" stroke="#696969" stroke-width="1.800"></rect><path d="M6.200 1V18" stroke="#696969" stroke-width="1.800"></path><path d="M10.500 5L17.500 9.500L10.500 14Z" fill="#696969"></path></svg>
<svg style="left:56px;top:954px" width="21" height="21" viewBox="0 0 21 21"><circle cx="10.500" cy="10.500" r="8" fill="none" stroke="#696969" stroke-width="2.900"></circle><path d="M4.700 4.700L16.300 16.300" stroke="#696969" stroke-width="2.900"></path></svg>
<div class="sep" style="left:93.500px;top:952.500px;height:23px;"></div>
<span class="t g" style="left: 108px; top: 955.5px; transform: scaleX(1.079); transform-origin: 0px 0px;">top</span>
<svg style="left:144.500px;top:960.500px" width="11" height="9" viewBox="0 0 11 9"><path d="M0 0H11L5.500 9Z" fill="#696969"></path></svg>
<div class="sep" style="left:168.500px;top:952.500px;height:23px;"></div>
<svg style="left:184.500px;top:955.500px" width="25" height="17" viewBox="0 0 25 17"><path d="M12.500 0.500C7 0.500 2.500 3.800 0.500 8.500C2.500 13.200 7 16.500 12.500 16.500S22.500 13.200 24.500 8.500C22.500 3.800 18 0.500 12.500 0.500Z" fill="#696969"></path><circle cx="12.500" cy="8.500" r="5.300" fill="#f1f3f4"></circle><circle cx="12.500" cy="8.500" r="3.200" fill="#696969"></circle></svg>
<div class="sep" style="left:224px;top:952.500px;height:23px;"></div>
<div class="a" style="left:235px;top:949.500px;width:1247.500px;height:29.500px;background:#fff;border:1px solid #e4e6e9;box-sizing:border-box;"></div>
<span class="t" style="color: rgb(112, 117, 122); left: 242px; top: 956.2px; letter-spacing: -0.3px;">Filter</span>
<span class="t g" style="left: 1496.5px; top: 955.5px; letter-spacing: -0.24px;">Default levels</span>
<svg style="left:1610px;top:960.500px" width="11" height="9" viewBox="0 0 11 9"><path d="M0 0H11L5.500 9Z" fill="#696969"></path></svg>
<div class="sep" style="left:1635.500px;top:952.500px;height:23px;"></div>
<div class="a" style="left:1643.500px;top:949px;width:124px;height:30px;border:1px solid #cbcdd1;border-radius:3px;box-sizing:border-box;background:#f1f3f4"></div>
<span class="t g" style="left: 1658.5px; top: 955.5px; letter-spacing: -0.79px;">1 Issue:</span>
<svg style="left:1725px;top:955.500px" width="17" height="17" viewBox="0 0 17 17"><path d="M2 0.500H15A1.500 1.500 0 0 1 16.500 2V11.500A1.500 1.500 0 0 1 15 13H4L0.500 16.500V2A1.500 1.500 0 0 1 2 0.500Z" fill="#1a73e8"></path><path d="M3.500 5H13.500M3.500 8.500H10" stroke="#fff" stroke-width="1.600"></path></svg>
<span class="t g" style="left: 1748.5px; top: 955.5px;">1</span>
<div class="sep" style="left:1783px;top:952.500px;height:23px;"></div>
<span class="t" style="color: rgb(154, 160, 166); left: 1797.5px; top: 955.5px; letter-spacing: -0.01px;">2 hidden</span>
<svg style="left:1884px;top:952px" width="24" height="24" viewBox="0 0 24 24"><path fill="#696969" d="M19.430 12.980c.04-.32.070-.64.070-.98s-.03-.66-.07-.98l2.110-1.650c.19-.15.240-.42.120-.64l-2-3.460c-.12-.22-.39-.3-.61-.22l-2.490 1c-.52-.4-1.080-.73-1.690-.98l-.38-2.650C14.460 2.180 14.250 2 14 2h-4c-.25 0-.46.18-.49.420l-.38 2.650c-.61.250-1.170.59-1.690.98l-2.490-1c-.23-.09-.49 0-.61.220l-2 3.460c-.13.220-.07.490.12.640l2.110 1.650c-.4.320-.7.650-.7.980s.3.660.7.980l-2.110 1.650c-.19.150-.24.420-.12.640l2 3.460c.12.220.39.300.61.220l2.490-1c.52.400 1.080.73 1.690.98l.38 2.650c.3.240.24.420.49.420h4c.25 0 .46-.18.490-.42l.38-2.650c.61-.25 1.170-.59 1.690-.98l2.490 1c.23.090.49 0 .61-.22l2-3.460c.12-.22.070-.49-.12-.64l-2.110-1.650zM12 15.500c-1.930 0-3.500-1.570-3.500-3.500s1.570-3.500 3.500-3.500 3.500 1.570 3.500 3.500-1.570 3.500-3.500 3.500z"></path></svg>
<!-- console messages -->
<div class="a" style="left:0;top:985.500px;width:1895px;height:16.500px;background:#fff0f0;overflow:hidden;">
  <svg style="left:11.700px;top:14.500px" width="10" height="10" viewBox="0 0 10 10"><path d="M0.500 0.500L9.500 9.500M9.500 0.500L0.500 9.500" stroke="#5f6368" stroke-width="1.800" fill="none"></path></svg>
  <span class="t m" style="font-size: 16.5px; color: rgb(255, 0, 0); left: 35.5px; top: 13px; letter-spacing: -0.03px;">/html/body/div[<span style="color:#1a1aa6">2</span>]/div[<span style="color:#1a1aa6">2</span>]/div/div/div[<span style="color:#1a1aa6">5</span>]/table/tbody/tr[<span style="color:#1a1aa6">1</span>]</span>
</div>
<div class="a" style="left:0;top:1002px;width:1895px;height:1.200px;background:#dfc9c9;"></div>
<div class="a" style="left:0;top:1003.200px;width:1895px;height:17px;background:#fff;"></div>
<svg style="left:15px;top:1012px" width="9" height="14" viewBox="0 0 9 14"><path d="M1.300 1.200L7.300 7L1.300 12.800" stroke="#1a73e8" stroke-width="2.200" fill="none"></path></svg>
<div class="a" style="left:1895px;top:985.500px;width:25px;height:35px;background:#f1f1f1;"></div>
<svg style="left:1898px;top:987px" width="20" height="33" viewBox="0 0 20 33"><path d="M10 1.500L14 6H6Z" fill="#b5b5b5"></path><path d="M2 7.800H18" stroke="#d0d0d0" stroke-width="0.800"></path><path d="M10 13.500L14 9.500H6Z" fill="#505050"></path><path d="M10 20L14 24.500H6Z" fill="#b5b5b5"></path><path d="M10 31L14 27H6Z" fill="#505050"></path></svg>
<!-- ===== red annotation boxes ===== -->
<div class="redbox" style="left:433px;top:378px;width:109px;height:46px;"></div>
<div class="redbox" style="left:906px;top:623px;width:100px;height:37.500px;"></div>
<div class="redbox" style="left:799px;top:703px;width:646px;height:99px;"></div>



</body></html>
